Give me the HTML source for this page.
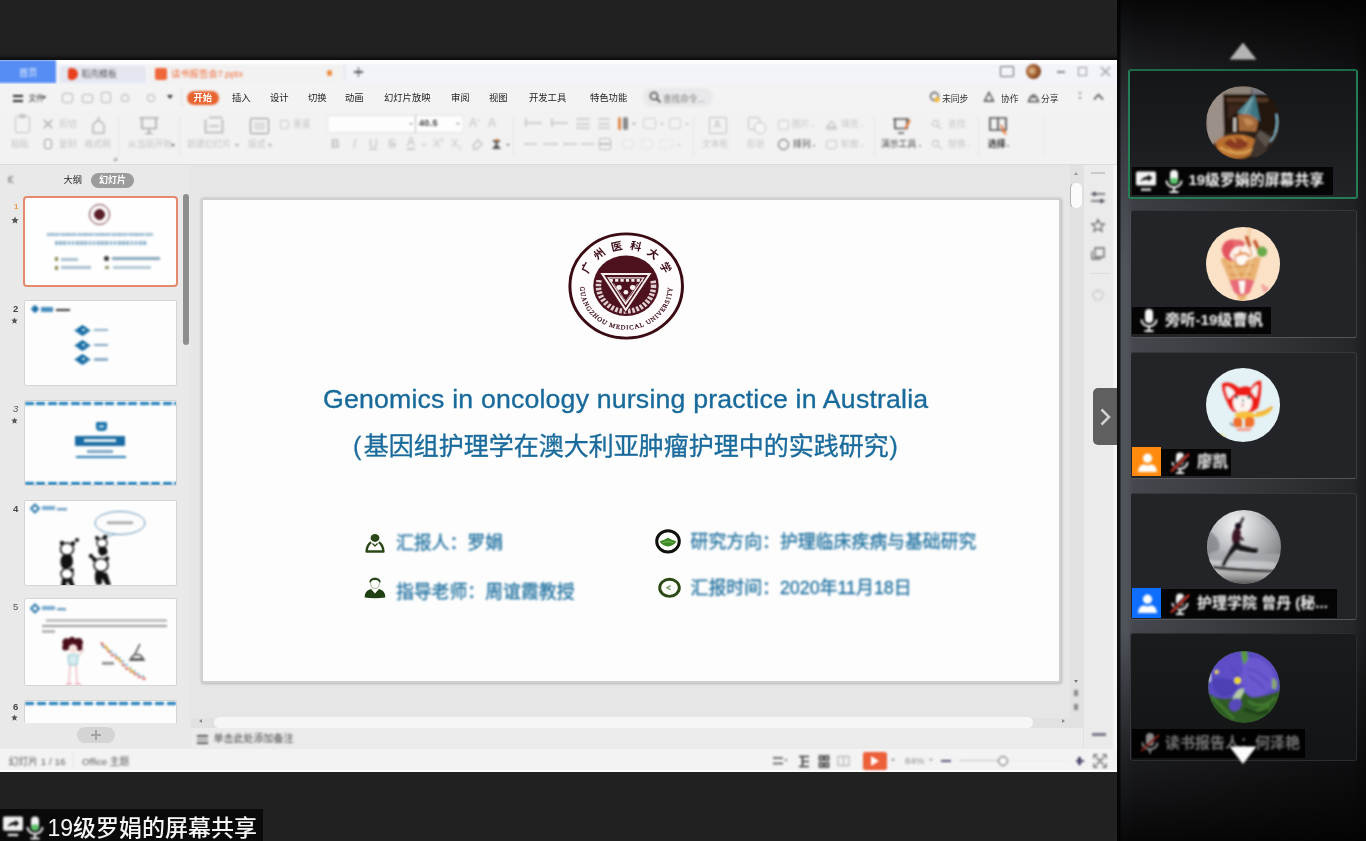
<!DOCTYPE html>
<html lang="zh">
<head>
<meta charset="utf-8">
<title>19级罗娟的屏幕共享</title>
<style>
*{box-sizing:border-box;margin:0;padding:0}
html,body{width:1366px;height:841px;overflow:hidden;background:#212121;font-family:"Liberation Sans",sans-serif;}
.abs,.cjk,#stage *{position:absolute}
#stage{position:relative;width:1366px;height:841px;overflow:hidden;background:#212121}
.cjk{white-space:nowrap;line-height:1.2;overflow:visible}
.cjk span{left:0;top:0;color:inherit;font-family:"Liberation Sans","Noto Sans CJK SC",sans-serif;white-space:nowrap;overflow:visible;height:100%}
.b{border-radius:1px}
/* ---------- PPT window ---------- */
#ppt{left:0;top:60px;width:1116.5px;height:712px;background:#e6e6e6;overflow:hidden}
#tabbar>*,#menubar>*,#ribbon>*,#status>*{filter:blur(.85px)}
#tabbar{left:0;top:0;width:1117px;height:24px;background:linear-gradient(180deg,#fdfdfe 0,#fdfdfe 3px,#f3f4f9 5px)}
#menubar{left:0;top:24px;width:1117px;height:27px;background:#f3f3f3}
#ribbon{left:0;top:51px;width:1117px;height:54px;background:#f2f2f2;border-bottom:1.5px solid #dcdcdc}
#status{left:0;top:689px;width:1117px;height:23.4px;background:#f3f3f3;border-bottom:2.6px solid #fcfcfc}
.ic{background:#b9b9b9;border-radius:2px;filter:blur(.6px)}
.icd{background:#7d7d7d;border-radius:2px;filter:blur(.6px)}
.ico{border:1.5px solid #b5b5b5;border-radius:2px;filter:blur(.5px)}
.thumb{background:#fdfdfd;border:1px solid #d4d4d4;border-radius:2px;overflow:hidden}
.soft{filter:blur(.8px)}
/* ---------- panel ---------- */
#panel{left:1116.5px;top:0;width:249.5px;height:841px;background:
 linear-gradient(180deg,rgba(0,0,0,.9) 0,rgba(0,0,0,.62) 60px,rgba(0,0,0,.34) 130px,rgba(0,0,0,.14) 200px,rgba(0,0,0,0) 270px,rgba(0,0,0,0) 628px,rgba(0,0,0,.36) 700px,rgba(0,0,0,.62) 760px,rgba(0,0,0,.9) 841px),
 linear-gradient(90deg,#0f0f11 0,#17171a 2.5px,#4f535b 4.5px,#50545c 10px,#46484f 16px,#37383c 50%,#25262a 95%,#1b1b1d 100%)}
.tile{left:13.5px;width:226.5px;height:127px;background:#232428;border:1px solid;border-color:#36373b #3c3d41 #55565a #4e4f54;border-radius:3px}
.lab{background:#050505;height:27px}
.av{width:74px;height:74px;border-radius:50%;overflow:hidden}

</style>
</head>
<body>
<div id="stage">
<div style="left:0;top:53px;width:1117px;height:8px;background:linear-gradient(180deg,#212121 0,#1c1c1c 35%,#0d0d0d 80%,#0a0a0a 100%)"></div>
<div id="ppt">
  <!-- tab bar -->
  <div id="tabbar">
    <div style="left:-2px;top:0;width:58px;height:23.3px;background:#558df4"></div>
    <div class="cjk " style="left:19px;top:8px;width:18.6px;height:11.2px;font-size:9.3px;filter:blur(0.9px);color:#e4edfe;"><span>首页</span></div>
    <div style="left:60px;top:5.5px;width:86px;height:17.8px;background:#e4e7f0;border-radius:2px 2px 0 0"></div>
    <div style="left:68px;top:8px;width:10px;height:12px;background:#e8401c;border-radius:3px 6px 6px 3px" class="soft"></div>
    <div class="cjk " style="left:81.5px;top:9px;width:35.2px;height:10.6px;font-size:8.8px;filter:blur(0.9px);color:#555555;"><span>稻壳模板</span></div>
    <div style="left:147px;top:1px;width:195px;height:23px;background:#f2f2f2;border-top:3.5px solid #fefefe;border-radius:2px 2px 0 0"></div>
    <div style="left:155px;top:7.5px;width:12px;height:12px;background:#f0673a;border-radius:2px" class="soft"></div>
    <div class="cjk " style="left:171px;top:8.5px;width:73.9px;height:11.2px;font-size:9.3px;filter:blur(0.9px);color:#f0703f;"><span>读书报告会7.pptx</span></div>
    <div style="left:327px;top:10.3px;width:5.4px;height:5.4px;border-radius:50%;background:#ee8a3a" class="soft"></div>
    <div style="left:344px;top:4px;width:1px;height:16px;background:#dcdde2"></div>
    <div style="left:354px;top:11px;width:9px;height:1.6px;background:#555" class="soft"></div>
    <div style="left:357.7px;top:7px;width:1.6px;height:10px;background:#555" class="soft"></div>
    <!-- window buttons -->
    <div style="left:1000px;top:6px;width:14px;height:11px;border:1.5px solid #6c6c6c;border-radius:1px" class="soft"></div>
    <div style="left:1026px;top:4px;width:15px;height:15px;border-radius:50%;background:radial-gradient(circle at 40% 45%,#e8c9a0 0,#a05a2a 45%,#4a2614 100%)" class="soft"></div>
    <div style="left:1057px;top:11px;width:8px;height:1.5px;background:#8a8a8a" class="soft"></div>
    <div style="left:1078px;top:7px;width:9px;height:9px;border:1.3px solid #9a9a9a" class="soft"></div>
    <svg style="left:1100px;top:6px" width="11" height="11" viewBox="0 0 11 11" class="soft"><path d="M1 1L10 10M10 1L1 10" stroke="#9a9a9a" stroke-width="1.3"/></svg>
  </div>
  <!-- menu bar -->
  <div id="menubar">
    <div style="left:13px;top:10.5px;width:10px;height:2px;background:#222" class="soft"></div>
    <div style="left:13px;top:15.5px;width:10px;height:2px;background:#222" class="soft"></div>
    <div class="cjk " style="left:28.5px;top:9.6px;width:15.6px;height:9.4px;font-size:7.8px;filter:blur(0.8px);color:#2a2a2a;"><span>文件</span></div>
    <div style="left:41.5px;top:11.5px;width:0;height:0;border:2.4px solid transparent;border-top:3px solid #333"></div>
    <div class="ico" style="left:62px;top:8.5px;width:11px;height:10.5px"></div>
    <div class="ico" style="left:81.5px;top:9.5px;width:11.5px;height:9px"></div>
    <div class="ico" style="left:101px;top:8px;width:10px;height:11px"></div>
    <div class="ico" style="left:121px;top:9.5px;width:7.5px;height:8px;border-radius:50%"></div>
    <div class="ico" style="left:147px;top:9.5px;width:7.5px;height:8px;border-radius:50%"></div>
    <div style="left:167px;top:11px;width:0;height:0;border:3px solid transparent;border-top:4px solid #333" class="soft"></div>
    <div style="left:181px;top:4px;width:1px;height:18px;background:#dedede"></div>
    <div style="left:186.5px;top:7.3px;width:32px;height:14px;border-radius:7px;background:#e8632f"></div>
    <div class="cjk " style="left:193.5px;top:9.3px;width:18.6px;height:11.2px;font-size:9.3px;filter:blur(0.6px);color:#ffffff;font-weight:bold;"><span>开始</span></div>
    <div class="cjk " style="left:232px;top:8.8px;width:18.6px;height:11.2px;font-size:9.3px;filter:blur(0.6px);color:#1c1c1c;"><span>插入</span></div>
    <div class="cjk " style="left:270px;top:8.8px;width:18.6px;height:11.2px;font-size:9.3px;filter:blur(0.6px);color:#1c1c1c;"><span>设计</span></div>
    <div class="cjk " style="left:308px;top:8.8px;width:18.6px;height:11.2px;font-size:9.3px;filter:blur(0.6px);color:#1c1c1c;"><span>切换</span></div>
    <div class="cjk " style="left:345px;top:8.8px;width:18.6px;height:11.2px;font-size:9.3px;filter:blur(0.6px);color:#1c1c1c;"><span>动画</span></div>
    <div class="cjk " style="left:384px;top:8.8px;width:46.5px;height:11.2px;font-size:9.3px;filter:blur(0.6px);color:#1c1c1c;"><span>幻灯片放映</span></div>
    <div class="cjk " style="left:451px;top:8.8px;width:18.6px;height:11.2px;font-size:9.3px;filter:blur(0.6px);color:#1c1c1c;"><span>审阅</span></div>
    <div class="cjk " style="left:489px;top:8.8px;width:18.6px;height:11.2px;font-size:9.3px;filter:blur(0.6px);color:#1c1c1c;"><span>视图</span></div>
    <div class="cjk " style="left:529px;top:8.8px;width:37.2px;height:11.2px;font-size:9.3px;filter:blur(0.6px);color:#1c1c1c;"><span>开发工具</span></div>
    <div class="cjk " style="left:590px;top:8.8px;width:37.2px;height:11.2px;font-size:9.3px;filter:blur(0.6px);color:#1c1c1c;"><span>特色功能</span></div>
    <div style="left:643px;top:4px;width:70px;height:19px;border-radius:9px;background:#e9e9eb"></div>
    <svg style="left:649px;top:7px" width="13" height="13" viewBox="0 0 13 13" class="soft"><circle cx="5" cy="5" r="3.6" fill="none" stroke="#444" stroke-width="1.5"/><path d="M7.8 7.8L11.5 11.5" stroke="#444" stroke-width="1.7"/></svg>
    <div class="cjk " style="left:663px;top:9.8px;width:41.6px;height:10.3px;font-size:8.6px;filter:blur(0.9px);color:#7a7a7a;"><span>查找命令...</span></div>
    <!-- right side -->
    <svg style="left:929px;top:7px" width="12" height="12" viewBox="0 0 12 12" class="soft"><circle cx="5.5" cy="5.5" r="4" fill="none" stroke="#555" stroke-width="1.3"/><circle cx="8" cy="8.5" r="2.6" fill="#f2b632"/></svg>
    <div class="cjk " style="left:942px;top:9.8px;width:26.4px;height:10.6px;font-size:8.8px;filter:blur(0.65px);color:#333;"><span>未同步</span></div>
    <svg style="left:983px;top:7px" width="12" height="12" viewBox="0 0 12 12" class="soft"><path d="M6 1.5L10.5 10H1.5Z" fill="none" stroke="#444" stroke-width="1.3"/></svg>
    <div class="cjk " style="left:1001px;top:9.8px;width:17.6px;height:10.6px;font-size:8.8px;filter:blur(0.65px);color:#333;"><span>协作</span></div>
    <svg style="left:1027px;top:8px" width="13" height="11" viewBox="0 0 13 11" class="soft"><path d="M1.5 9.5H11.5L9.5 5H3.5Z" fill="none" stroke="#444" stroke-width="1.4"/><path d="M4.5 3.2H8.5" stroke="#444" stroke-width="1.3"/></svg>
    <div class="cjk " style="left:1041px;top:9.8px;width:17.6px;height:10.6px;font-size:8.8px;filter:blur(0.65px);color:#333;"><span>分享</span></div>
    <div style="left:1078.5px;top:8px;width:2px;height:2px;background:#8a8a8a"></div>
    <div style="left:1078.5px;top:12.5px;width:2px;height:2px;background:#8a8a8a"></div>
    <svg style="left:1093px;top:9px" width="11" height="8" viewBox="0 0 11 8" class="soft"><path d="M1 6.5L5.5 1.5L10 6.5" fill="none" stroke="#444" stroke-width="1.5"/></svg>
  </div>
  <!-- ribbon -->
  <div id="ribbon">
    <!-- clipboard group -->
    <div class="ico" style="left:15px;top:5px;width:15px;height:17px;border-radius:2px;border-color:#c2c2c2"></div>
    <div class="ic" style="left:19px;top:3px;width:7px;height:4px;background:#c6c6c6"></div>
    <div class="cjk " style="left:11px;top:28px;width:17.6px;height:10.6px;font-size:8.8px;filter:blur(0.8px);color:#c4c4c4;"><span>粘贴</span></div>
    <svg style="left:43px;top:8px" width="11" height="11" viewBox="0 0 11 11" class="soft"><path d="M1 1L9 9M9 1L1 9" stroke="#a8a8a8" stroke-width="1.4"/></svg>
    <div class="cjk " style="left:59px;top:8px;width:17.6px;height:10.6px;font-size:8.8px;filter:blur(0.8px);color:#c4c4c4;"><span>剪切</span></div>
    <div class="ico" style="left:44px;top:28px;width:8px;height:10px;border-color:#9e9e9e"></div>
    <div class="cjk " style="left:59px;top:28px;width:17.6px;height:10.6px;font-size:8.8px;filter:blur(0.8px);color:#c4c4c4;"><span>复制</span></div>
    <svg style="left:90px;top:4px" width="17" height="19" viewBox="0 0 17 19" class="soft"><path d="M8.5 1.5V6M3 18V10L6.5 6H10.5L14 10V18Z" fill="none" stroke="#b8b8b8" stroke-width="1.5"/></svg>
    <div class="cjk " style="left:84.5px;top:28px;width:26.4px;height:10.6px;font-size:8.8px;filter:blur(0.8px);color:#c4c4c4;"><span>格式刷</span></div>
    <div style="left:118px;top:6px;width:1px;height:40px;background:#e6e6e6"></div>
    <div style="left:113px;top:46px;width:0;height:0;border:2px solid transparent;border-right-color:#999;border-bottom-color:#999"></div>
    <!-- start from current -->
    <svg style="left:138px;top:5px" width="22" height="19" viewBox="0 0 22 19" class="soft"><path d="M1.5 2H20.5M4 2V12.5H18V2M11 12.5V17M7.5 17.5H14.5" fill="none" stroke="#aaaaaa" stroke-width="1.6"/></svg>
    <div class="cjk " style="left:128px;top:28px;width:44.0px;height:10.6px;font-size:8.8px;filter:blur(0.8px);color:#c4c4c4;"><span>从当前开始</span></div>
    <div style="left:171px;top:33px;width:0;height:0;border:2.2px solid transparent;border-top:3px solid #777"></div>
    <div style="left:179px;top:6px;width:1px;height:40px;background:#e6e6e6"></div>
    <!-- new slide -->
    <svg style="left:204px;top:5px" width="20" height="18" viewBox="0 0 20 18" class="soft"><path d="M1.5 3.5V16.5H18.5V3.5M5 1.5H18.5" fill="none" stroke="#b2b2b2" stroke-width="1.6"/><path d="M5 10H15" stroke="#c5c5c5" stroke-width="2"/></svg>
    <div class="cjk " style="left:187px;top:28px;width:44.0px;height:10.6px;font-size:8.8px;filter:blur(0.8px);color:#c4c4c4;"><span>新建幻灯片</span></div>
    <div style="left:235px;top:33px;width:0;height:0;border:2.2px solid transparent;border-top:3px solid #aaa"></div>
    <div class="ico" style="left:250px;top:7px;width:19px;height:16px;border-color:#8f8f8f;border-width:1.6px"></div>
    <div class="ic" style="left:254px;top:11px;width:11px;height:8px;background:#dedede"></div>
    <div class="cjk " style="left:248px;top:28px;width:17.6px;height:10.6px;font-size:8.8px;filter:blur(0.8px);color:#c4c4c4;"><span>版式</span></div>
    <div style="left:268px;top:33px;width:0;height:0;border:2.2px solid transparent;border-top:3px solid #aaa"></div>
    <div class="ico" style="left:280px;top:9px;width:9px;height:9px;border-color:#c8c8c8"></div>
    <div class="cjk " style="left:293px;top:8px;width:17.6px;height:10.6px;font-size:8.8px;filter:blur(0.8px);color:#c8c8c8;"><span>重置</span></div>
    <!-- font group -->
    <div style="left:327px;top:4px;width:137px;height:18px;background:#fdfdfd;border:1px solid #e2e2e2;border-radius:2px"></div>
    <div style="left:415px;top:4px;width:1px;height:18px;background:#bdbdbd"></div>
    <div style="left:409px;top:12px;width:0;height:0;border:2px solid transparent;border-top:2.6px solid #999"></div>
    <div class="soft" style="left:419px;top:7px;font-size:9px;color:#3a3a3a;font-weight:bold;letter-spacing:.3px">40.5</div>
    <div style="left:456px;top:12px;width:0;height:0;border:2px solid transparent;border-top:2.6px solid #999"></div>
    <div class="soft" style="left:469px;top:5px;font-size:12px;color:#c2c2c2">A<sup style="position:static;font-size:6px">+</sup></div>
    <div class="soft" style="left:488px;top:5px;font-size:12px;color:#c2c2c2">A<sup style="position:static;font-size:6px">-</sup></div>
    <div class="soft" style="left:331px;top:26px;font-size:12px;color:#c0c0c0;font-weight:bold">B</div>
    <div class="soft" style="left:353px;top:26px;font-size:12px;color:#c4c4c4;font-style:italic">I</div>
    <div class="soft" style="left:369px;top:26px;font-size:12px;color:#c0c0c0;text-decoration:underline">U</div>
    <div class="soft" style="left:388px;top:26px;font-size:12px;color:#c0c0c0;text-decoration:line-through">S</div>
    <div class="soft" style="left:407px;top:25px;font-size:12px;color:#bdbdbd;border-bottom:2px solid #c8c8c8;line-height:12px">A</div>
    <div style="left:422px;top:33px;width:0;height:0;border:2px solid transparent;border-top:2.6px solid #bbb"></div>
    <div class="soft" style="left:433px;top:26px;font-size:11px;color:#c4c4c4">X<sup style="position:static;font-size:6px">2</sup></div>
    <div class="soft" style="left:451px;top:26px;font-size:11px;color:#c4c4c4">X<sub style="position:static;font-size:6px">2</sub></div>
    <svg style="left:471px;top:27px" width="12" height="12" viewBox="0 0 12 12" class="soft"><path d="M2 8L7 2L11 6L6 11H3Z" fill="none" stroke="#c0c0c0" stroke-width="1.3"/></svg>
    <svg style="left:490px;top:26px" width="14" height="14" viewBox="0 0 14 14" class="soft"><path d="M2 3H11L7 7L11 12H2L6 7Z" fill="#555"/><path d="M7 1L9 4H5Z" fill="#e8793a"/></svg>
    <div style="left:506px;top:33px;width:0;height:0;border:2px solid transparent;border-top:2.6px solid #777"></div>
    <div style="left:513px;top:6px;width:1px;height:40px;background:#e6e6e6"></div>
    <!-- paragraph group row1 -->
    <div class="ic" style="left:525px;top:11px;width:17px;height:2px;background:#d0d0d0"></div><div class="ic" style="left:525px;top:7px;width:2px;height:9px;background:#d0d0d0"></div>
    <div class="ic" style="left:551px;top:11px;width:17px;height:2px;background:#d0d0d0"></div><div class="ic" style="left:551px;top:7px;width:2px;height:9px;background:#d0d0d0"></div>
    <div class="ic" style="left:576px;top:7px;width:14px;height:2px;background:#d0d0d0"></div><div class="ic" style="left:576px;top:12px;width:14px;height:2px;background:#d0d0d0"></div><div class="ic" style="left:576px;top:16px;width:14px;height:2px;background:#d0d0d0"></div>
    <div class="ic" style="left:598px;top:7px;width:12px;height:2px;background:#d0d0d0"></div><div class="ic" style="left:598px;top:12px;width:12px;height:2px;background:#d0d0d0"></div><div class="ic" style="left:598px;top:16px;width:12px;height:2px;background:#d0d0d0"></div>
    <div class="ic" style="left:618px;top:6px;width:3px;height:13px;background:#e0884a"></div><div class="ic" style="left:623px;top:6px;width:5px;height:13px;background:#8a8a8a"></div>
    <div style="left:632px;top:12px;width:0;height:0;border:2px solid transparent;border-top:2.6px solid #999"></div>
    <div class="ico" style="left:643px;top:7px;width:13px;height:11px;border-color:#d0d0d0"></div>
    <div style="left:660px;top:12px;width:0;height:0;border:2px solid transparent;border-top:2.6px solid #bbb"></div>
    <div class="ico" style="left:669px;top:7px;width:12px;height:11px;border-color:#d0d0d0"></div>
    <div style="left:685px;top:12px;width:0;height:0;border:2px solid transparent;border-top:2.6px solid #bbb"></div>
    <!-- row2 -->
    <div class="ic" style="left:524px;top:32px;width:13px;height:2px;background:#cfcfcf"></div>
    <div class="ic" style="left:543px;top:32px;width:15px;height:2px;background:#cfcfcf"></div>
    <div class="ic" style="left:563px;top:32px;width:14px;height:2px;background:#cfcfcf"></div>
    <div class="ic" style="left:581px;top:32px;width:13px;height:2px;background:#cfcfcf"></div>
    <div class="ico" style="left:599px;top:27px;width:12px;height:12px;border-color:#bcbcbc"></div><div class="ic" style="left:599px;top:32px;width:12px;height:1.5px;background:#bcbcbc"></div>
    <div class="ico" style="left:622px;top:28px;width:12px;height:10px;border-color:#dcdcdc;border-style:dashed"></div>
    <div class="ico" style="left:641px;top:28px;width:12px;height:10px;border-color:#dcdcdc;border-style:dashed"></div>
    <div class="ico" style="left:660px;top:28px;width:13px;height:10px;border-color:#dcdcdc;border-style:dashed"></div>
    <div style="left:677px;top:33px;width:0;height:0;border:2px solid transparent;border-top:2.6px solid #ccc"></div>
    <div style="left:693px;top:6px;width:1px;height:40px;background:#e6e6e6"></div>
    <!-- insert group -->
    <div class="ico" style="left:709px;top:6px;width:18px;height:17px;border-color:#c0c0c0"></div>
    <div class="soft" style="left:714px;top:8px;font-size:10px;color:#bdbdbd">A</div>
    <div class="cjk " style="left:702px;top:28px;width:26.4px;height:10.6px;font-size:8.8px;filter:blur(0.8px);color:#c6c6c6;"><span>文本框</span></div>
    <div class="ico" style="left:748px;top:6px;width:12px;height:13px;border-color:#c4c4c4"></div><div class="ico" style="left:754px;top:11px;width:12px;height:12px;border-color:#c4c4c4;border-radius:50%;background:#f6f6f6"></div>
    <div class="cjk " style="left:747px;top:28px;width:17.6px;height:10.6px;font-size:8.8px;filter:blur(0.8px);color:#c6c6c6;"><span>形状</span></div>
    <div class="ico" style="left:778px;top:9px;width:11px;height:10px;border-color:#cccccc"></div>
    <div class="cjk " style="left:792px;top:8px;width:17.6px;height:10.6px;font-size:8.8px;filter:blur(0.8px);color:#c6c6c6;"><span>图片</span></div>
    <div style="left:812px;top:14px;width:0;height:0;border:1.8px solid transparent;border-top:2.4px solid #ccc"></div>
    <svg style="left:825px;top:8px" width="13" height="11" viewBox="0 0 13 11" class="soft"><path d="M2 8L6.5 2L11 8ZM1 10H12" fill="none" stroke="#c6c6c6" stroke-width="1.3"/></svg>
    <div class="cjk " style="left:841px;top:8px;width:17.6px;height:10.6px;font-size:8.8px;filter:blur(0.8px);color:#c6c6c6;"><span>填充</span></div>
    <div style="left:861px;top:14px;width:0;height:0;border:1.8px solid transparent;border-top:2.4px solid #ccc"></div>
    <div class="ico" style="left:778px;top:28px;width:11px;height:11px;border-color:#555;border-radius:50%;border-width:1.6px"></div>
    <div class="cjk " style="left:793px;top:28px;width:17.6px;height:10.6px;font-size:8.8px;filter:blur(0.8px);color:#444;"><span>排列</span></div>
    <div style="left:813px;top:34px;width:0;height:0;border:1.8px solid transparent;border-top:2.4px solid #666"></div>
    <div class="ico" style="left:826px;top:29px;width:11px;height:9px;border-color:#c6c6c6"></div>
    <div class="cjk " style="left:841px;top:28px;width:17.6px;height:10.6px;font-size:8.8px;filter:blur(0.8px);color:#c6c6c6;"><span>轮廓</span></div>
    <div style="left:861px;top:34px;width:0;height:0;border:1.8px solid transparent;border-top:2.4px solid #ccc"></div>
    <div style="left:874px;top:6px;width:1px;height:40px;background:#e6e6e6"></div>
    <!-- tools -->
    <svg style="left:891px;top:6px" width="22" height="18" viewBox="0 0 22 18" class="soft"><path d="M2 2H18M4 2V11.5H16V2M7 16H13" fill="none" stroke="#555" stroke-width="1.7"/><path d="M14 12L19 3" stroke="#e8793a" stroke-width="2"/></svg>
    <div class="cjk " style="left:881px;top:28px;width:35.2px;height:10.6px;font-size:8.8px;filter:blur(0.8px);color:#444;"><span>演示工具</span></div>
    <div style="left:919px;top:34px;width:0;height:0;border:1.8px solid transparent;border-top:2.4px solid #666"></div>
    <svg style="left:931px;top:8px" width="11" height="11" viewBox="0 0 11 11" class="soft"><circle cx="4.5" cy="4.5" r="3" fill="none" stroke="#cccccc" stroke-width="1.3"/><path d="M7 7L10 10" stroke="#ccc" stroke-width="1.3"/></svg>
    <div class="cjk " style="left:948px;top:8px;width:17.6px;height:10.6px;font-size:8.8px;filter:blur(0.8px);color:#c8c8c8;"><span>查找</span></div>
    <svg style="left:931px;top:28px" width="12" height="11" viewBox="0 0 12 11" class="soft"><circle cx="4.5" cy="4.5" r="3" fill="none" stroke="#cccccc" stroke-width="1.3"/><path d="M7 7L11 10" stroke="#ccc" stroke-width="1.3"/></svg>
    <div class="cjk " style="left:948px;top:28px;width:17.6px;height:10.6px;font-size:8.8px;filter:blur(0.8px);color:#c8c8c8;"><span>替换</span></div>
    <div style="left:968px;top:34px;width:0;height:0;border:1.8px solid transparent;border-top:2.4px solid #ccc"></div>
    <div style="left:978px;top:6px;width:1px;height:40px;background:#e6e6e6"></div>
    <svg style="left:988px;top:5px" width="21" height="19" viewBox="0 0 21 19" class="soft"><path d="M2 2H18V14H2ZM10 2V14" fill="none" stroke="#555" stroke-width="1.7"/><path d="M13 9L17 17L14.5 15.5" fill="none" stroke="#e8793a" stroke-width="1.8"/></svg>
    <div class="cjk " style="left:988px;top:28px;width:17.6px;height:10.6px;font-size:8.8px;filter:blur(0.8px);color:#333;font-weight:bold;"><span>选择</span></div>
    <div style="left:1007px;top:34px;width:0;height:0;border:1.8px solid transparent;border-top:2.4px solid #555"></div>
    <div style="left:1044px;top:6px;width:1px;height:40px;background:#e9e9e9"></div>

  </div>
  <!-- left outline panel -->
  <div style="left:0;top:105px;width:192px;height:584px;background:linear-gradient(90deg,#e9e9e9 0,#e9e9e9 188px,#e6e6e6 192px)"></div>
  <svg style="left:7px;top:115px" width="8" height="9" viewBox="0 0 8 9" class="soft"><path d="M6 1L2 4.5L6 8M2 1V8" fill="none" stroke="#8a8a8a" stroke-width="1.2"/></svg>
  <div class="cjk " style="left:63.5px;top:115.3px;width:18.6px;height:11.2px;font-size:9.3px;filter:blur(0.75px);color:#1e1e1e;"><span>大纲</span></div>
  <div style="left:91px;top:113px;width:43px;height:15px;border-radius:8px;background:#9c9c9c"></div>
  <div class="cjk " style="left:99px;top:115.2px;width:27.0px;height:10.8px;font-size:9px;filter:blur(0.65px);color:#ffffff;font-weight:bold;"><span>幻灯片</span></div>
  <div style="left:182.5px;top:134px;width:6px;height:151px;border-radius:3px;background:#8e8e8e"></div>
  <!-- slide numbers -->
  <div style="filter:blur(.45px);left:14px;top:142px;font-size:8px;color:#e39a4a;font-weight:bold">1</div>
  <svg style="left:11px;top:156px;filter:blur(.4px)" width="8.0" height="8.0" viewBox="0 0 10 10"><path d="M5 .6L6.300 3.700L9.600 4L7.100 6.200L7.900 9.500L5 7.700L2.100 9.500L2.900 6.200L.4 4L3.700 3.700Z" fill="#555"/></svg>
  <div style="filter:blur(.45px);left:13px;top:243px;font-size:9.5px;color:#444;font-weight:bold">2</div>
  <svg style="left:11px;top:257px;filter:blur(.4px)" width="7.0" height="7.0" viewBox="0 0 10 10"><path d="M5 .6L6.300 3.700L9.600 4L7.100 6.200L7.900 9.500L5 7.700L2.100 9.500L2.900 6.200L.4 4L3.700 3.700Z" fill="#555"/></svg>
  <div style="filter:blur(.45px);left:13px;top:343px;font-size:9.5px;color:#555;font-style:italic">3</div>
  <svg style="left:11px;top:357px;filter:blur(.4px)" width="7.0" height="7.0" viewBox="0 0 10 10"><path d="M5 .6L6.300 3.700L9.600 4L7.100 6.200L7.900 9.500L5 7.700L2.100 9.500L2.900 6.200L.4 4L3.700 3.700Z" fill="#555"/></svg>
  <div style="filter:blur(.45px);left:13px;top:443px;font-size:9.5px;color:#444;font-weight:bold">4</div>
  <div style="filter:blur(.45px);left:13px;top:541px;font-size:9.5px;color:#555">5</div>
  <div style="filter:blur(.45px);left:13px;top:641px;font-size:9.5px;color:#444;font-weight:bold">6</div>
  <svg style="left:11px;top:654px;filter:blur(.4px)" width="7.0" height="7.0" viewBox="0 0 10 10"><path d="M5 .6L6.300 3.700L9.600 4L7.100 6.200L7.900 9.500L5 7.700L2.100 9.500L2.900 6.200L.4 4L3.700 3.700Z" fill="#555"/></svg>
  <!-- thumb 1 (selected) -->
  <div class="thumb" style="left:22.8px;top:136.3px;width:155px;height:90.7px;border:2px solid #e58a6c;border-radius:4px;background:#fefefe">
    <div style="left:64px;top:6px;width:21px;height:21px;border-radius:50%;border:1.2px solid #6b2a33;background:radial-gradient(circle,#5b1f2a 0 38%,#fdfdfd 42% 100%)" class="soft"></div>
    <div style="left:22px;top:35px;width:106px;height:2.6px;background:repeating-linear-gradient(90deg,#8fb2c9 0 2.2px,#d9e6ee 2.2px 3.4px);filter:blur(.9px)"></div>
    <div style="left:30px;top:42.5px;width:92px;height:3.8px;background:repeating-linear-gradient(90deg,#93b6cd 0 2.6px,#e0eaf1 2.6px 4.2px);filter:blur(.9px)"></div>
    <div style="left:30px;top:59px;width:3px;height:4px;background:#8a8a50;filter:blur(.9px)"></div>
    <div style="left:36px;top:59.5px;width:17px;height:2.8px;background:#a9c0cf;filter:blur(1px)"></div>
    <div style="left:30px;top:67.5px;width:3px;height:4px;background:#8a8a50;filter:blur(.9px)"></div>
    <div style="left:36px;top:68px;width:30px;height:2.8px;background:#a9c0cf;filter:blur(1px)"></div>
    <div style="left:79px;top:58px;width:5px;height:5px;border-radius:50%;background:#333;filter:blur(.9px)"></div>
    <div style="left:87px;top:59px;width:48px;height:2.8px;background:#8aa9bd;filter:blur(1px)"></div>
    <div style="left:80px;top:67.5px;width:4px;height:3px;background:#9a9a70;filter:blur(.9px)"></div>
    <div style="left:88px;top:68px;width:38px;height:2.4px;background:#b5c9d5;filter:blur(1px)"></div>
  </div>
  <!-- thumb 2 -->
  <div class="thumb" style="left:23.5px;top:239.5px;width:153.5px;height:86px">
    <div style="left:7px;top:5.5px;width:6px;height:6px;background:#1a6fa6;transform:rotate(45deg)" class="soft"></div>
    <div style="left:16px;top:6.5px;width:12px;height:5px;background:#4a8fbe;filter:blur(1px)"></div>
    <div style="left:31px;top:8px;width:14px;height:2.6px;background:#333;filter:blur(.9px)"></div>
    <div style="left:53.5px;top:25.5px;width:9px;height:9px;background:#1a6fa6;transform:scale(1.25,.9) rotate(45deg)" class="soft"></div>
    <div style="left:53.5px;top:40px;width:9px;height:9px;background:#1a6fa6;transform:scale(1.25,.9) rotate(45deg)" class="soft"></div>
    <div style="left:53.5px;top:54.5px;width:9px;height:9px;background:#1a6fa6;transform:scale(1.25,.9) rotate(45deg)" class="soft"></div>
    <div style="left:57px;top:28.5px;width:3px;height:2px;background:#cfe3f0;filter:blur(1px)"></div>
    <div style="left:57px;top:43px;width:3px;height:2px;background:#cfe3f0;filter:blur(1px)"></div>
    <div style="left:57px;top:57.5px;width:3px;height:2px;background:#cfe3f0;filter:blur(1px)"></div>
    <div style="left:69px;top:28.5px;width:14px;height:2.4px;background:#8fb0c8;filter:blur(1px)"></div>
    <div style="left:69px;top:43px;width:14px;height:2.6px;background:#7fa4c0;filter:blur(1px)"></div>
    <div style="left:69px;top:57.5px;width:14px;height:2.6px;background:#8fb0c8;filter:blur(1px)"></div>
  </div>
  <!-- thumb 3 -->
  <div class="thumb" style="left:23.5px;top:339.5px;width:153.5px;height:86px">
    <div style="left:0;top:1px;width:152px;height:3.2px;background:repeating-linear-gradient(90deg,#1878b6 0 8.6px,transparent 8.6px 11.5px)" class="soft"></div>
    <div style="left:0;top:81px;width:152px;height:3.2px;background:repeating-linear-gradient(90deg,#1878b6 0 8.6px,transparent 8.6px 11.5px)" class="soft"></div>
    <div style="left:71px;top:21.5px;width:11px;height:9px;background:#1a72ac;border-radius:1px 1px 4px 4px" class="soft"></div>
    <div style="left:74px;top:24px;width:5px;height:3px;background:#9cc3de;filter:blur(.9px)"></div>
    <div style="left:50px;top:35px;width:50px;height:10px;background:#1a6ca4;border-radius:1px" class="soft"></div>
    <div style="left:59px;top:38.5px;width:32px;height:3px;background:#e4eef5;filter:blur(1px)"></div>
    <div style="left:62px;top:49px;width:26px;height:3.4px;background:#7ba6c4;filter:blur(1px)"></div>
    <div style="left:51px;top:55.5px;width:50px;height:1.6px;background:#2a7cb0;filter:blur(1px)"></div>
  </div>
  <!-- thumb 4 -->
  <div class="thumb" style="left:23.5px;top:440px;width:153.5px;height:86px">
    <svg style="left:0;top:0" width="153" height="86" viewBox="0 0 153 86" class="soft">
      <path d="M10 3.5L14 7.5L10 11.5L6 7.5Z" fill="none" stroke="#1a6fa6" stroke-width="1.8"/>
      <rect x="17" y="5" width="13" height="4" fill="#5a98c4" opacity=".8"/><rect x="32" y="7" width="10" height="2.4" fill="#4a88b4" opacity=".8"/>
      <ellipse cx="95" cy="22" rx="25" ry="11.5" fill="#fcfcfc" stroke="#5b8fb5" stroke-width="1"/>
      <path d="M84 32L80 37L90 33Z" fill="#fcfcfc" stroke="#5b8fb5" stroke-width=".8"/>
      <rect x="82" y="20.5" width="26" height="2.6" fill="#888" opacity=".75"/>
      <!-- panda pair left -->
      <ellipse cx="42" cy="48" rx="6.5" ry="6" fill="#fff" stroke="#111" stroke-width="1.6"/>
      <circle cx="37" cy="42" r="2.2" fill="#111"/><circle cx="48" cy="42.5" r="2.2" fill="#111"/><circle cx="52" cy="39" r="2" fill="#111"/>
      <path d="M38 54C34 58 35 66 39 68L46 66C49 62 48 57 46 54Z" fill="#111"/>
      <ellipse cx="42" cy="73" rx="6" ry="5.5" fill="#fff" stroke="#111" stroke-width="1.5"/>
      <path d="M37 78L36 86H41L42 80L46 86H50L47 77Z" fill="#111"/>
      <circle cx="47" cy="69" r="2" fill="#111"/>
      <!-- panda pair right -->
      <circle cx="72" cy="37" r="2" fill="#111"/><circle cx="80" cy="36" r="2.2" fill="#111"/>
      <ellipse cx="77" cy="42" rx="5" ry="4.5" fill="#fff" stroke="#111" stroke-width="1.4"/>
      <path d="M74 46C72 50 74 54 77 55L82 53C83 50 82 47 80 46Z" fill="#111"/>
      <circle cx="66" cy="55" r="2.2" fill="#111"/><path d="M67 56L72 62" stroke="#111" stroke-width="2.4"/>
      <ellipse cx="76" cy="64" rx="7" ry="6.5" fill="#fff" stroke="#111" stroke-width="1.6"/>
      <circle cx="69" cy="58" r="2.2" fill="#111"/><circle cx="82" cy="57.5" r="2.2" fill="#111"/>
      <path d="M71 70C69 75 70 80 72 84L77 83L77 77L81 84H86L82 72Z" fill="#111"/>
    </svg>
  </div>
  <!-- thumb 5 -->
  <div class="thumb" style="left:23.5px;top:538px;width:153.5px;height:87.5px">
    <svg style="left:0;top:0" width="153" height="87" viewBox="0 0 153 87" class="soft">
      <path d="M10 5.5L14 9.5L10 13.5L6 9.5Z" fill="none" stroke="#1a6fa6" stroke-width="1.8"/>
      <rect x="17" y="7" width="13" height="4" fill="#5a98c4" opacity=".8"/><rect x="32" y="9" width="9" height="2.4" fill="#4a88b4" opacity=".8"/>
      <rect x="21" y="20.5" width="121" height="2" fill="#8a8a8a" opacity=".75"/>
      <rect x="17" y="26" width="125" height="2" fill="#777" opacity=".75"/>
      <rect x="17" y="31.5" width="13" height="2" fill="#777" opacity=".75"/>
      <!-- girl -->
      <path d="M38 46C36 41 40 38 44 40C45 37 49 37 50 40C55 37 60 41 57 47C59 51 54 53 52 51L42 51C38 53 36 49 38 46Z" fill="#4a0d1a"/>
      <ellipse cx="48" cy="50" rx="4.5" ry="4.8" fill="#f6e4de"/>
      <path d="M43 56H53L52 66H44Z" fill="#d8ecef" stroke="#6bbac6" stroke-width=".8"/>
      <path d="M54 57L59 50" stroke="#f0d0d0" stroke-width="1.6"/>
      <path d="M45 66L44 84M51 66L52 84" stroke="#f0b8c0" stroke-width="1.4"/>
      <path d="M41 85H47M50 85H56" stroke="#e8a0ac" stroke-width="1.4"/>
      <!-- dna -->
      <path d="M76 44C82 48 84 55 90 58C96 61 98 68 104 71C110 74 113 79 121 80" fill="none" stroke="#d8574a" stroke-width="2.2" stroke-dasharray="3 2"/>
      <path d="M77 47C83 50 86 52 91 56C96 60 100 65 105 69C110 73 114 76 120 78" fill="none" stroke="#3c9ac8" stroke-width="1.8" stroke-dasharray="2 3"/>
      <path d="M80 46L84 52M92 58L96 63M104 69L109 74" stroke="#e8c23a" stroke-width="1.6"/>
      <rect x="77" y="63" width="12" height="2.6" fill="#555" opacity=".7"/>
      <!-- microscope -->
      <path d="M115 45L110 55M106 60C108 54 116 54 118 60ZM104 61H120" fill="none" stroke="#444" stroke-width="1.4"/>
    </svg>
  </div>
  <!-- thumb 6 -->
  <div class="thumb" style="left:23.5px;top:639.6px;width:153.5px;height:23px;border-bottom:0;border-radius:2px 2px 0 0">
    <div style="left:0;top:1.2px;width:152px;height:2.8px;background:repeating-linear-gradient(90deg,#1878b6 0 9px,transparent 9px 11.8px)" class="soft"></div>
  </div>

  <div style="left:77px;top:667px;width:38px;height:16px;border-radius:8px;background:#d4d4d4"></div>
  <div style="left:91px;top:674.2px;width:10px;height:1.6px;background:#a2a2a2"></div>
  <div style="left:95.2px;top:670px;width:1.6px;height:10px;background:#a2a2a2"></div>
  <!-- slide canvas -->
  <div id="slide" style="left:200.8px;top:138.4px;width:860px;height:484.4px;background:#fdfdfd;border:2px solid #d0d0d0;border-radius:3px;box-shadow:.5px .5px 2.5px rgba(0,0,0,.2)"></div>
  <!-- scrollbar tracks / notes row bg -->
  <div style="left:1069.5px;top:105px;width:12.5px;height:563px;background:#e1e1e1"></div>
  <div style="left:191px;top:657.5px;width:891px;height:10.5px;background:#e1e1e1"></div>
  <div style="left:191px;top:668px;width:892px;height:21px;background:#ebebeb"></div>
  <!-- horizontal scrollbar -->
  <div style="left:197px;top:659px;width:0;height:0;border:2.5px solid transparent;border-right:3.5px solid #8a8a8a"></div>
  <div style="left:214px;top:656.5px;width:819px;height:11px;border-radius:6px;background:#f6f6f6"></div>
  <div style="left:1062px;top:659px;width:0;height:0;border:2.5px solid transparent;border-left:3.5px solid #8a8a8a"></div>
  <!-- notes row -->
  <div style="left:196.5px;top:675px;width:11px;height:1.6px;background:#555" class="soft"></div>
  <div style="left:196.5px;top:678.5px;width:11px;height:1.6px;background:#555" class="soft"></div>
  <div style="left:196.5px;top:682px;width:11px;height:1.6px;background:#555" class="soft"></div>
  <div class="cjk " style="left:213.5px;top:672.5px;width:80.0px;height:12.0px;font-size:10px;filter:blur(0.9px);color:#484848;"><span>单击此处添加备注</span></div>
  <!-- vertical scrollbar -->
  <div style="left:1073.5px;top:110px;width:0;height:0;border:2.5px solid transparent;border-bottom:3.5px solid #9a9a9a"></div>
  <div style="left:1070px;top:121.5px;width:12.5px;height:27.5px;border-radius:6px;background:#fbfbfb;border:1px solid #dcdcdc;border-left:1.6px solid #b2b2b2;filter:blur(.4px)"></div>
  <div style="left:1073.5px;top:620px;width:0;height:0;border:2.5px solid transparent;border-top:3.5px solid #777"></div>
  <div style="left:1074px;top:630px;width:4px;height:6px;background:#8a8a8a" class="soft"></div>
  <div style="left:1074px;top:644px;width:4px;height:6px;background:#8a8a8a" class="soft"></div>
  <!-- right tool strip -->
  <div style="left:1083px;top:105px;width:34px;height:584px;background:#ebebeb;border-left:1px solid #e0e0e0"></div>
  <div style="left:1111.5px;top:105px;width:5px;height:584px;background:linear-gradient(90deg,#ebebeb,#f6f6f6 50%)"></div>
  <div style="left:1092px;top:672.5px;width:14px;height:3px;background:#77778a" class="soft"></div>
  <div style="left:1091px;top:112px;width:14px;height:1.5px;background:#c8c8c8"></div>
  <svg style="left:1090px;top:131px" width="16" height="13" viewBox="0 0 16 13" class="soft"><path d="M1 3H15M1 10H15" stroke="#5c5c6a" stroke-width="1.4"/><rect x="3" y="1" width="3" height="4" fill="#5c5c6a"/><rect x="10" y="8" width="3" height="4" fill="#5c5c6a"/></svg>
  <svg style="left:1090px;top:158px" width="16" height="15" viewBox="0 0 16 15" class="soft"><path d="M8 1.5L9.8 5.6L14.3 6L10.9 8.9L12 13.3L8 10.9L4 13.3L5.1 8.9L1.7 6L6.2 5.6Z" fill="none" stroke="#666" stroke-width="1.2"/></svg>
  <svg style="left:1090px;top:186px" width="16" height="14" viewBox="0 0 16 14" class="soft"><path d="M5 2H14V11H5ZM2 5V13H11" fill="none" stroke="#666" stroke-width="1.3"/></svg>
  <div style="left:1090px;top:213px;width:20px;height:1px;background:#dcdcdc"></div>
  <svg style="left:1091px;top:228px" width="14" height="13" viewBox="0 0 14 13" class="soft"><circle cx="7" cy="7" r="5" fill="none" stroke="#c6c6c6" stroke-width="1.2"/><path d="M7 2V5" stroke="#c6c6c6" stroke-width="1.2"/></svg>
  <div style="left:1093px;top:328px;width:24px;height:57px;border-radius:5px 0 0 5px;background:#5f5f5f;box-shadow:0 0 1px #fff"></div>
  <svg style="left:1099px;top:347px;filter:blur(.5px)" width="12" height="20" viewBox="0 0 12 20"><path d="M2.5 2.5L10 10L2.500 17.500" fill="none" stroke="#d2d2d2" stroke-width="2.5"/></svg>

  <!-- status bar -->
  <div id="status">
    <div class="cjk " style="left:8.5px;top:6.6px;width:56.7px;height:11.9px;font-size:9.9px;filter:blur(0.9px);color:#5c5c5c;"><span>幻灯片 1 / 16</span></div>
    <div style="left:73px;top:4px;width:1px;height:15px;background:#e4e4e4"></div>
    <div class="cjk " style="left:82px;top:6.6px;width:48.1px;height:11.6px;font-size:9.7px;filter:blur(0.9px);color:#5c5c5c;"><span>Office 主题</span></div>
    <svg style="left:772px;top:6px" width="16" height="12" viewBox="0 0 16 12" class="soft"><path d="M1 3H11M1 8.5H11" stroke="#4a4a4a" stroke-width="1.7"/><path d="M12.5 4.5L15.5 4.5L14 6.5Z" fill="#555"/></svg>
    <svg style="left:798px;top:5.5px" width="12" height="13" viewBox="0 0 12 13" class="soft"><path d="M1 1.5H11M1 11.5H11M4.5 1.5V11.5M4.5 6.5H11" fill="none" stroke="#3c3c3c" stroke-width="1.7"/></svg>
    <svg style="left:818px;top:5.5px" width="12" height="13" viewBox="0 0 12 13" class="soft"><path d="M1.5 1H5V5H1.5ZM7 1H10.5V5H7ZM1.5 8H5V12H1.5ZM7 8H10.5V12H7Z" fill="none" stroke="#3c3c3c" stroke-width="1.6"/></svg>
    <svg style="left:837px;top:6px" width="13" height="12" viewBox="0 0 13 12" class="soft"><path d="M1 1.5H12V10.5H1ZM6.5 1.5V10.5" fill="none" stroke="#bdbdbd" stroke-width="1.4"/></svg>
    <div style="left:862.5px;top:2.5px;width:24.5px;height:18.5px;border-radius:2.5px;background:#ec5f38"></div>
    <div style="left:870.5px;top:6.5px;width:0;height:0;border:5.2px solid transparent;border-left:8.5px solid #fff;border-right:0" class="soft"></div>
    <div style="left:891px;top:10px;width:0;height:0;border:2px solid transparent;border-top:2.6px solid #777"></div>
    <div class="soft" style="left:905px;top:5.5px;font-size:9.5px;color:#8a8a8a;letter-spacing:.2px">84%</div>
    <div style="left:928.5px;top:10px;width:0;height:0;border:2px solid transparent;border-top:2.6px solid #888"></div>
    <div style="left:941px;top:10.5px;width:9.5px;height:2.2px;background:#54547a" class="soft"></div>
    <div style="left:959px;top:11px;width:40px;height:1px;background:#c4c4c4"></div>
    <div style="left:997.5px;top:6.5px;width:10px;height:10px;border-radius:50%;border:1.6px solid #5a5a5a;background:#f6f6f6" class="soft"></div>
    <div style="left:1008px;top:11px;width:62px;height:1px;background:#ebebeb"></div>
    <div style="left:1075.5px;top:10.5px;width:8px;height:2.2px;background:#44446a" class="soft"></div>
    <div style="left:1078.4px;top:7.5px;width:2.2px;height:8px;background:#44446a" class="soft"></div>
    <svg style="left:1092.5px;top:5px" width="14" height="14" viewBox="0 0 14 14" class="soft"><path d="M1 4.5V1H4.5M9.5 1H13V4.5M13 9.5V13H9.5M4.500 13H1V9.5M3.5 3.5L10.5 10.5M10.5 3.5L3.5 10.5" fill="none" stroke="#555" stroke-width="1.3"/></svg>

  </div>
</div>

<!-- ===== slide content (absolute on stage) ===== -->
<svg id="logo" style="left:566px;top:226px;filter:blur(.6px)" width="121" height="121" viewBox="566 226 121 121">
 <g transform="translate(626.2 286) scale(.998 .923) translate(-626.5 -286.5)">
  <circle cx="626.5" cy="286.5" r="56.4" fill="#fefcfc" stroke="#3b0b14" stroke-width="3"/>
  <circle cx="626.3" cy="286.2" r="32.8" fill="#4e121e"/>
  <!-- wreath -->
  <clipPath id="lowhalf"><path d="M590 280L603 280L626 316L650 280L664 280V325H590Z"/></clipPath>
  <circle cx="626.3" cy="286.2" r="27.6" fill="none" stroke="#f1e6e7" stroke-width="5.5" stroke-dasharray="2.6 1.7" opacity=".9" clip-path="url(#lowhalf)"/>
  <!-- shield / V emblem -->
  <path d="M602.5 273.5H650L626 312.5Z" fill="#4e121e" stroke="#f6eeee" stroke-width="2.1"/>
  <path d="M608.5 277.6H644L626 306Z" fill="#4e121e" stroke="#f1e6e7" stroke-width="1.3"/>
  <path d="M610 280.4H643" stroke="#f6eeee" stroke-width="2.8" stroke-dasharray="3.2 2.2"/>
  <circle cx="619.3" cy="288" r="2.7" fill="#f8f0f0"/><circle cx="633" cy="288" r="2.7" fill="#f8f0f0"/><circle cx="626.2" cy="293.3" r="2.4" fill="#f8f0f0"/>
  <path d="M620.5 297.5L626 305.5L631.5 297.5" fill="none" stroke="#f3eaea" stroke-width="1.6"/>
  <path d="M614 284L626 303L638 284" fill="none" stroke="#e7d6d8" stroke-width="1" opacity=".7"/>
  <!-- chinese name on top arc -->
  <g font-family="'Liberation Sans','Noto Sans CJK SC',sans-serif" font-size="11.4" font-weight="bold" fill="#3f0e18" text-anchor="middle">
   <text transform="translate(587.0 266.4) rotate(-63.0)" x="0" y="4.3">广</text>
   <text transform="translate(599.3 251.5) rotate(-37.8)" x="0" y="4.3">州</text>
   <text transform="translate(616.8 243.3) rotate(-12.6)" x="0" y="4.3">医</text>
   <text transform="translate(636.2 243.3) rotate(12.6)" x="0" y="4.3">科</text>
   <text transform="translate(653.7 251.5) rotate(37.8)" x="0" y="4.3">大</text>
   <text transform="translate(666.0 266.4) rotate(63.0)" x="0" y="4.3">学</text>
  </g>
  <!-- english name on bottom arc -->
  <defs><path id="arcb" d="M580.3 287.5 A46.2 46.2 0 0 0 672.7 287.5"/></defs>
  <text font-family="Liberation Serif, serif" font-size="6.7" fill="#3f0e18" stroke="#3f0e18" stroke-width=".25"><textPath href="#arcb" startOffset="0" textLength="144" lengthAdjust="spacing">GUANGZHOU MEDICAL UNIVERSITY</textPath></text>
 </g>
</svg>

<div id="t-en" style="left:323px;top:383px;width:606px;height:32px;font-size:26.7px;line-height:32px;color:#186a9b;-webkit-text-stroke:.35px #186a9b;white-space:nowrap;letter-spacing:.18px;filter:blur(.7px)">Genomics in oncology nursing practice in Australia</div>
<div class="cjk " style="left:353px;top:431.3px;width:8.5px;height:30.0px;font-size:25px;filter:blur(0.7px);color:#1b6d9e;-webkit-text-stroke:.3px #1b6d9e;"><span>(</span></div><div class="cjk " style="left:363.8px;top:431.3px;width:526.1px;height:30.0px;font-size:25px;filter:blur(0.7px);color:#1a6b9c;-webkit-text-stroke:.35px #1a6b9c;"><span>基因组护理学在澳大利亚肿瘤护理中的实践研究</span></div><div class="cjk " style="left:889.6px;top:431.3px;width:8.5px;height:30.0px;font-size:25px;filter:blur(0.7px);color:#1b6d9e;-webkit-text-stroke:.3px #1b6d9e;"><span>)</span></div>

<!-- presenter -->
<svg style="left:364px;top:531px;filter:blur(.7px)" width="22" height="24" viewBox="0 0 22 24">
  <ellipse cx="11" cy="7" rx="4.4" ry="3.9" fill="#2b4718"/>
  <path d="M7.2 11.2C4.2 13 2.8 16.5 2.6 20.5H19.4C19.2 16.5 17.8 13 14.8 11.2" fill="none" stroke="#2b4718" stroke-width="2.5" stroke-linejoin="round"/>
  <path d="M8.5 12.5L11 15L13.5 12.5" fill="none" stroke="#2f4a1c" stroke-width="1.4"/>
</svg>
<div class="cjk " style="left:395.9px;top:533.2px;width:107.3px;height:21.5px;font-size:17.88px;filter:blur(0.8px);color:#2272a0;-webkit-text-stroke:.3px #2272a0;"><span>汇报人：罗娟</span></div>
<svg style="left:363px;top:575px;filter:blur(.7px)" width="24" height="24" viewBox="0 0 24 24">
  <path d="M7.6 8.2C7.6 4.4 9.4 2.6 12 2.6S16.400 4.400 16.400 8.200C16.400 11.400 14.400 13.600 12 13.600S7.600 11.400 7.600 8.200Z" fill="#fdfdfd" stroke="#b4bfaa" stroke-width="1.1"/>
  <path d="M6.8 7.2C7.4 2.4 16.600 2.400 17.200 7.200L16.200 5.800C14.800 3.800 9.200 3.800 7.800 5.800Z" fill="#234417" stroke="#234417" stroke-width="1.2"/>
  <path d="M1.800 22.600C1.400 18 3.800 15.400 8 14L12 18.400L16 14C20.200 15.400 22.600 18 22.200 22.600C16 23.400 8 23.400 1.800 22.600Z" fill="#1f4012"/>
</svg>
<div class="cjk " style="left:395.9px;top:581.6px;width:178.8px;height:21.5px;font-size:17.88px;filter:blur(0.8px);color:#2272a0;-webkit-text-stroke:.3px #2272a0;"><span>指导老师：周谊霞教授</span></div>
<!-- research direction -->
<svg style="left:654px;top:528px;filter:blur(.7px)" width="28" height="27" viewBox="0 0 28 27">
  <ellipse cx="14" cy="13.3" rx="11.3" ry="10.6" fill="#fcfdfb" stroke="#0e100c" stroke-width="3"/>
  <path d="M5.6 13.2C9 12.6 11.5 11 14 9.8C16.5 11 19 12.6 22.4 13.2C20.5 16.6 17.5 18.4 14 18.4C10.5 18.4 7.5 16.6 5.6 13.2Z" fill="#3d8a24"/>
  <path d="M9 14.6C12 13.4 16 13.4 19 14.6" fill="none" stroke="#7fb86a" stroke-width=".9"/>
</svg>
<div class="cjk " style="left:690.6px;top:531.5px;width:286.1px;height:21.5px;font-size:17.88px;filter:blur(0.8px);color:#2272a0;-webkit-text-stroke:.3px #2272a0;"><span>研究方向：护理临床疾病与基础研究</span></div>
<svg style="left:657px;top:577px;filter:blur(.7px)" width="25" height="22" viewBox="0 0 25 22">
  <ellipse cx="12.5" cy="10.8" rx="9.8" ry="8.6" fill="#fcfdfb" stroke="#2c4a14" stroke-width="2.9"/>
  <path d="M13.6 8.6L10 10.8L13.6 12.6" fill="none" stroke="#7d9a6a" stroke-width="1.5"/>
</svg>
<div class="cjk " style="left:690.6px;top:578px;width:224.7px;height:21.5px;font-size:17.88px;filter:blur(0.8px);color:#2272a0;-webkit-text-stroke:.3px #2272a0;"><span>汇报时间：2020年11月18日</span></div>

<div id="panel">
    <!-- up arrow -->
  <svg style="left:110px;top:40px" width="32" height="22" viewBox="0 0 32 22" class="soft"><path d="M16 2.5L29.5 19.5H2.5Z" fill="#b4b4b4"/></svg>

  <!-- tile 1 (active speaker) -->
  <div class="tile" style="left:11px;top:68.5px;width:230px;height:130.5px;border:2.6px solid #237e55;border-top-color:#1c6a48;background:linear-gradient(180deg,#151617,#1c1d20 60%,#232428)">
    <div class="av" style="left:76.5px;top:15px"><svg width="74" height="74" viewBox="0 0 74 74" style="left:0;top:0"><defs><filter id="b1"><feGaussianBlur stdDeviation="1.3"/></filter></defs>
<rect width="74" height="74" fill="#2a1f19"/>
<g filter="url(#b1)">
<path d="M0 0H19L18 50L5 60L0 60Z" fill="#9c9189"/>
<path d="M17 0H45V8H17Z" fill="#8f847a"/>
<path d="M45 0H62V11H46Z" fill="#7a7a80"/>
<path d="M17 8H72V46H18Z" fill="#22120c"/>
<path d="M20 12H62V16H21Z" fill="#543828"/>
<path d="M22 18L38 18L22 34Z" fill="#3e271c"/>
<path d="M48.500 8L31 27L43 30L54 35Z" fill="#568c98"/>
<path d="M48.500 8L44 30L54 35Z" fill="#3e7482"/>
<path d="M46 12L38 28" stroke="#8ab4bc" stroke-width="1.400"/>
<path d="M32 29C40 26 50 30 52 36L50 46L33 45Z" fill="#a4693a"/>
<path d="M37 33C42 31 47 34 48 38L41 40Z" fill="#c48a55"/>
<rect x="27.500" y="32" width="2.400" height="14" fill="#d8d4cc"/>
<path d="M9 57C14 47 40 45 50 54C54 60 48 72 32 73C18 73 11 66 9 57Z" fill="#b86f2e"/>
<path d="M18 57C24 51 38 51 42 58C40 64 26 66 18 57Z" fill="#8a3a20"/>
<path d="M14 61C20 67 36 70 46 63" fill="none" stroke="#dca458" stroke-width="2.200"/>
<path d="M26 52L30 56M36 50L40 55M22 62L27 66" stroke="#e0904a" stroke-width="1.600"/>
<path d="M70.500 28C73 38 70 50 64 56" fill="none" stroke="#84c0d4" stroke-width="2"/>
<path d="M54 44L66 52L60 62L50 50Z" fill="#5c534c"/>
<path d="M50 50L62 64L52 72L44 70Z" fill="#3e352e"/>
</g></svg>
</div>
    <div class="lab" style="left:2px;top:96px;width:201px;height:28px"></div>
    <svg style="left:5px;top:99px" width="22" height="22" viewBox="0 0 22 22" class="soft"><rect x="1" y="1.5" width="20" height="14" rx="1.5" fill="#f2f2f2"/><path d="M5 11.5C7 8 10 6.5 13 6.5V4.5L17.5 8L13 11.5V9.5C10 9.5 7.5 10.2 5 11.5Z" fill="#111"/><rect x="6" y="18.5" width="10" height="2.2" fill="#f2f2f2"/></svg>
    <svg style="left:33px;top:98px" width="22" height="25" viewBox="0 0 22 25" class="soft"><rect x="7" y="1" width="8" height="14" rx="4" fill="#f4f4f4"/><rect x="7" y="9" width="8" height="6" rx="3" fill="#58c46a"/><path d="M3.5 11.5C3.5 20.5 18.5 20.5 18.5 11.5" fill="none" stroke="#f4f4f4" stroke-width="2"/><path d="M11 19V22.5M6.5 23H15.5" stroke="#f4f4f4" stroke-width="2"/></svg>
    <div class="cjk " style="left:59px;top:101px;width:136.8px;height:17.9px;font-size:14.9px;filter:blur(0.8px);color:#f4f4f4;font-weight:bold;"><span>19级罗娟的屏幕共享</span></div>
  </div>

  <!-- tile 2 -->
  <div class="tile" style="top:209.9px;height:128px">
    <div class="av" style="left:74.8px;top:16.5px"><svg width="74" height="74" viewBox="0 0 74 74" style="left:0;top:0"><defs><filter id="b2"><feGaussianBlur stdDeviation="1"/></filter></defs>
<rect width="74" height="74" fill="#fbe1c6"/>
<g filter="url(#b2)" transform="translate(37 38) scale(1.12) translate(-36 -38)">
<path d="M40 2L44 2L40 30Z" fill="#f3cfa4"/>
<path d="M16 33C24 28 44 28 52 32L47 50L37 70L33 70L24 52Z" fill="#e9b273"/>
<path d="M22 40L46 38M24 47L44 46M27 54L42 53M30 60L40 59" stroke="#d9934d" stroke-width="1.800" opacity=".8"/>
<path d="M26 36L38 62M44 34L32 62" stroke="#f4d09c" stroke-width="1.600" opacity=".8"/>
<path d="M17 24C18 16 26 13 32 17C36 20 36 28 30 33C24 36 18 33 17 24Z" fill="#e25560"/>
<path d="M26 18C30 14 36 15 38 19L33 26Z" fill="#e86a70"/>
<path d="M24 30C26 22 32 20 36 22L40 20C44 20 48 24 48 30L42 33L30 36Z" fill="#fdf4ec"/>
<path d="M28 28L30 36M33 24L35 30M42 22L44 30" stroke="#e9a070" stroke-width="1.400"/>
<path d="M39 12L42 22M46 16L50 24" stroke="#c4552c" stroke-width="3"/>
<circle cx="53" cy="26" r="4.600" fill="#6aaa4a"/>
<circle cx="34.500" cy="34" r="4.200" fill="#fffaf6"/>
<path d="M30 30C34 26 40 27 42 31" fill="none" stroke="#e6883e" stroke-width="2"/>
<path d="M24 52C28 50 44 50 46 52L42 63L34 66L28 62Z" fill="#e86a78"/>
<path d="M32 52H38L37 63L34 64Z" fill="#fff8f4"/>
<path d="M52 56C54 54 56 56 56 58C58 56 60 58 58 60L55 63Z" fill="#f2a0a0"/>
<circle cx="12" cy="13" r="1" fill="#f0a0a0"/>
</g></svg>
</div>
    <div class="lab" style="left:0.5px;top:96px;width:139px;height:27px"></div>
    <svg style="left:7px;top:97px" width="22" height="25" viewBox="0 0 22 25" class="soft"><rect x="7" y="1" width="8" height="14" rx="4" fill="#f4f4f4"/><path d="M3.5 11.5C3.5 20.5 18.5 20.5 18.5 11.5" fill="none" stroke="#f4f4f4" stroke-width="2"/><path d="M11 19V22.5M6.5 23H15.5" stroke="#f4f4f4" stroke-width="2"/></svg>
    <div class="cjk " style="left:34px;top:100px;width:99.6px;height:18.2px;font-size:15.2px;filter:blur(0.8px);color:#f4f4f4;font-weight:bold;"><span>旁听-19级曹帆</span></div>
  </div>

  <!-- tile 3 -->
  <div class="tile" style="top:352px;height:127px">
    <div class="av" style="left:75px;top:14.5px"><svg width="74" height="74" viewBox="0 0 74 74" style="left:0;top:0"><defs><filter id="b3"><feGaussianBlur stdDeviation=".9"/></filter></defs>
<rect width="74" height="74" fill="#e4f1f5"/>
<g filter="url(#b3)">
<path d="M16 16C20 13 28 15 33 20C38 18 42 18 45 20C48 15 52 12 55 13C56 22 54 32 52 40L46 44H28L24 40C20 32 16 24 16 16Z" fill="#ee1c12"/>
<path d="M19.500 19C22 18 27 21 29 25L23 31C21 27 19.500 23 19.500 19Z" fill="#f2f8f8"/>
<path d="M52 17C50 17 47 20 45 23L50 30C51.500 26 52 21 52 17Z" fill="#f2f8f8"/>
<path d="M27 34C27 28 32 27 37 28C42 27 46 29 46 34C46 40 43 45 36.500 45C30 45 27 40 27 34Z" fill="#fbf6f2"/>
<circle cx="30.500" cy="29" r="1.800" fill="#3a6a6a"/><circle cx="43" cy="29" r="1.800" fill="#3a6a6a"/>
<path d="M36 31L38 31L37 36Z" fill="#5a8a90"/><path d="M36.500 36V39" stroke="#e86a6a" stroke-width="1.600"/>
<path d="M28 47C34 42 42 42 48 46C56 46 62 42 67 38C66 44 58 50 48 49C42 52 34 52 28 47Z" fill="#f7c23a"/>
<path d="M50 45C56 45 62 42 66 39" fill="none" stroke="#f0a020" stroke-width="1.600"/>
<path d="M28 51C30 48 35 49 36 52V59H29C27 57 27 53 28 51Z" fill="#f0702c"/>
<path d="M39 52C40 48 46 48 48 51C49 54 48 58 46 59H39Z" fill="#f0702c"/>
<path d="M30 60H46L44 63H32Z" fill="#f4a090"/>
<path d="M24 55L28 58" stroke="#6a6a8a" stroke-width="1.400"/>
<path d="M14 66L19 70" stroke="#f0d86a" stroke-width="2"/>
</g></svg>
</div>
    <div style="left:1.3px;top:94.3px;width:29px;height:29px;background:#ff8a0e"></div>
    <svg style="left:5px;top:98px" width="23" height="23" viewBox="0 0 23 23" class="soft"><circle cx="11.5" cy="7.2" r="4.6" fill="#fff"/><path d="M2 21C2.5 14 7 12 11.500 14.500C16 12 20.500 14 21 21Z" fill="#fff"/></svg>
    <div class="lab" style="left:30.3px;top:95.5px;width:70px;height:27.8px"></div>
    <svg style="left:37px;top:98px" width="24" height="24" viewBox="0 0 24 24" class="soft"><rect x="8" y="1.5" width="8" height="13" rx="4" fill="#f0f0f0"/><path d="M4.5 11C4.5 20 19.5 20 19.5 11" fill="none" stroke="#f0f0f0" stroke-width="2"/><path d="M12 18.500V21.500M8 22H16" stroke="#f0f0f0" stroke-width="2"/><path d="M3 20.500L21 3" stroke="#050505" stroke-width="4.500"/><path d="M3 20.500L21 3" stroke="#e0382e" stroke-width="2"/></svg>

    <div class="cjk " style="left:66px;top:100px;width:31.0px;height:18.6px;font-size:15.5px;filter:blur(0.8px);color:#f2f2f2;font-weight:bold;"><span>廖凯</span></div>
  </div>

  <!-- tile 4 -->
  <div class="tile" style="top:492.8px;height:127.5px">
    <div class="av" style="left:76px;top:16px"><svg width="74" height="74" viewBox="0 0 74 74" style="left:0;top:0"><defs><filter id="b4"><feGaussianBlur stdDeviation="1"/></filter>
<radialGradient id="sky4" cx=".40" cy=".20" r=".8"><stop offset="0" stop-color="#f4f4f6"/><stop offset=".3" stop-color="#cfd0d4"/><stop offset=".65" stop-color="#a0a2a6"/><stop offset="1" stop-color="#6c6e72"/></radialGradient>
<linearGradient id="gr4" x1="0" y1="0" x2="0" y2="1"><stop offset="0" stop-color="#c4c4c4"/><stop offset=".55" stop-color="#9a9a9a"/><stop offset="1" stop-color="#505050"/></linearGradient></defs>
<rect width="74" height="74" fill="url(#sky4)"/>
<g filter="url(#b4)">
<path d="M0 20C8 24 14 30 12 40L0 44Z" fill="#7c7e82" opacity=".7"/>
<path d="M50 6C60 10 70 20 74 34V10Z" fill="#8a8c90" opacity=".6"/>
<path d="M4 44C14 40 26 42 36 44C48 46 62 42 74 44V52H0Z" fill="#a8aaae" opacity=".75"/>
<path d="M0 49C16 53 40 49 74 53V59H0Z" fill="#d4d6da" opacity=".75"/>
<path d="M0 59H74V74H0Z" fill="url(#gr4)"/>
<path d="M6 55.500C20 57.500 40 58.500 68 60V62.500C40 62 20 60.500 6 58.500Z" fill="#1c1e22"/>
<circle cx="31.300" cy="16" r="3.300" fill="#18101a"/>
<path d="M32.500 15L36.500 7.500" stroke="#2a2024" stroke-width="2.300"/>
<path d="M29 18C33.500 18 34.500 22 33.500 26L32.500 33L26 33C24 28 25 21 29 18Z" fill="#3a1628"/>
<path d="M32 27L36.500 30" stroke="#2a1420" stroke-width="2.300"/>
<path d="M27 32C30 31 33 33 34 35L47 38.500L50.500 38L50.500 43L46 43L32 40.500L28 38Z" fill="#141218"/>
<path d="M27 33L31.500 37L22 48L18 56L14 55L19 46Z" fill="#141218"/>
</g></svg>
</div>
    <div style="left:1.3px;top:94.6px;width:29px;height:29.4px;background:#0d6dfc"></div>
    <svg style="left:5px;top:98px" width="23" height="23" viewBox="0 0 23 23" class="soft"><circle cx="11.5" cy="7.2" r="4.6" fill="#fff"/><path d="M2 21C2.5 14 7 12 11.500 14.500C16 12 20.500 14 21 21Z" fill="#fff"/></svg>
    <div class="lab" style="left:30.3px;top:95.6px;width:176px;height:28.4px"></div>
    <svg style="left:37px;top:98px" width="24" height="24" viewBox="0 0 24 24" class="soft"><rect x="8" y="1.5" width="8" height="13" rx="4" fill="#f0f0f0"/><path d="M4.5 11C4.5 20 19.5 20 19.5 11" fill="none" stroke="#f0f0f0" stroke-width="2"/><path d="M12 18.500V21.500M8 22H16" stroke="#f0f0f0" stroke-width="2"/><path d="M3 20.500L21 3" stroke="#050505" stroke-width="4.500"/><path d="M3 20.500L21 3" stroke="#e0382e" stroke-width="2"/></svg>

    <div class="cjk " style="left:66px;top:100px;width:136.4px;height:18.0px;font-size:15px;filter:blur(0.8px);color:#f2f2f2;font-weight:bold;"><span>护理学院 曾丹 (秘...</span></div>
  </div>

  <!-- tile 5 (fading) -->
  <div class="tile" style="top:632.6px;height:128.4px;background:linear-gradient(180deg,#1a1b1d,#131415);border-color:#2c2d30 #2a2b2e #2c2d30 #38393d">
    <div class="av" style="left:77px;top:17px;width:72px;height:72px"><svg width="72" height="72" viewBox="0 0 72 72" style="left:0;top:0"><defs><filter id="b5"><feGaussianBlur stdDeviation="1.1"/></filter></defs>
<rect width="72" height="72" fill="#2f5a24"/>
<g filter="url(#b5)">
<path d="M0 0H72V40C60 44 50 48 42 46L34 40L26 46C18 50 8 48 0 42Z" fill="#5a4cc2"/>
<path d="M36 8C48 4 62 10 66 24C68 36 58 46 46 46C38 44 34 38 34 30C32 20 32 12 36 8Z" fill="#6a58d0"/>
<path d="M6 16C14 4 30 2 34 10C36 18 34 26 30 30C22 30 10 28 6 16Z" fill="#5d4ec6"/>
<path d="M4 28C12 26 24 28 30 32C30 40 24 46 14 46C8 44 4 36 4 28Z" fill="#4e40b4"/>
<path d="M40 18C48 20 56 24 60 30M40 24C46 28 52 32 56 38M22 14L30 26" stroke="#4a3ca8" stroke-width="1.200" opacity=".7" fill="none"/>
<path d="M33 0H39L40 8L36 14L34 8Z" fill="#5a9a3a"/>
<path d="M0 22C2 20 4 24 3 30L0 32Z" fill="#b8b8d8"/>
<path d="M64 28C68 26 70 32 68 38L64 38Z" fill="#8aa86a"/>
<circle cx="29.600" cy="29.600" r="3.300" fill="#f2de1e"/>
<circle cx="8.700" cy="21" r="2.100" fill="#e8d22a"/>
<path d="M24 50C26 42 32 36 36 38C36 44 32 50 26 52Z" fill="#b4cca4"/>
<path d="M22 50C26 46 34 46 34 52C34 58 28 62 24 60C20 58 20 54 22 50Z" fill="#5848b8"/>
<path d="M4 46C10 52 18 60 26 68M40 50C48 56 58 56 68 46M44 62L62 54" stroke="#4a8a34" stroke-width="2.400" opacity=".8" fill="none"/>
<path d="M36 58C44 62 54 64 60 60" stroke="#1e3e18" stroke-width="3" fill="none"/>
</g></svg>
</div>
    <div class="lab" style="left:0.5px;top:95.5px;width:173px;height:28.5px;background:#020202"></div>
    <svg style="left:8px;top:98px;opacity:.6" width="22" height="24" viewBox="0 0 22 24" class="soft"><rect x="7" y="1" width="8" height="13" rx="4" fill="#e8e8e8"/><path d="M3.5 10.500C3.5 19.500 18.5 19.500 18.5 10.500" fill="none" stroke="#e8e8e8" stroke-width="2"/><path d="M11 18V21.500" stroke="#e8e8e8" stroke-width="2"/><path d="M2 19L20 3" stroke="#d8322a" stroke-width="2"/></svg>
    <div class="cjk " style="left:34px;top:100.5px;width:135.0px;height:18.0px;font-size:15px;filter:blur(0.9px);opacity:0.55;color:#cfcfcf;font-weight:bold;"><span>读书报告人：何泽艳</span></div>
  </div>
  <!-- down arrow -->
  <svg style="left:110px;top:744px" width="32" height="22" viewBox="0 0 32 22" class="soft"><path d="M2.5 2.5H29.5L16 20Z" fill="#fbfbfb"/></svg>
</div>

<!-- bottom-left share label -->
<div style="left:0;top:809px;width:263px;height:32px;background:#0a0a0a"></div>
<svg style="left:1.5px;top:815px" width="22" height="23" viewBox="0 0 21 22" class="soft"><rect x="1" y="1.5" width="19" height="13.5" rx="1.5" fill="#f2f2f2"/><path d="M5 11C7 8 9.500 6.500 12.500 6.500V4.500L16.500 8L12.500 11.500V9.500C9.500 9.500 7.500 10 5 11Z" fill="#111"/><rect x="5.500" y="18" width="10" height="2.200" fill="#f2f2f2"/></svg>
<svg style="left:24px;top:814.5px" width="22" height="26" viewBox="0 0 22 25" class="soft"><rect x="7" y="1" width="8" height="14" rx="4" fill="#f4f4f4"/><rect x="7" y="9" width="8" height="6" rx="3" fill="#58c46a"/><path d="M3.5 11.500C3.5 20.500 18.500 20.500 18.500 11.500" fill="none" stroke="#f4f4f4" stroke-width="2"/><path d="M11 19V22.500M6.500 23H15.500" stroke="#f4f4f4" stroke-width="2"/></svg>
<div class="cjk " style="left:47.5px;top:815px;width:210.2px;height:27.6px;font-size:23px;filter:blur(0.7px);color:#f6f6f6;font-weight:500;"><span>19级罗娟的屏幕共享</span></div>

</div>
</body>
</html>
